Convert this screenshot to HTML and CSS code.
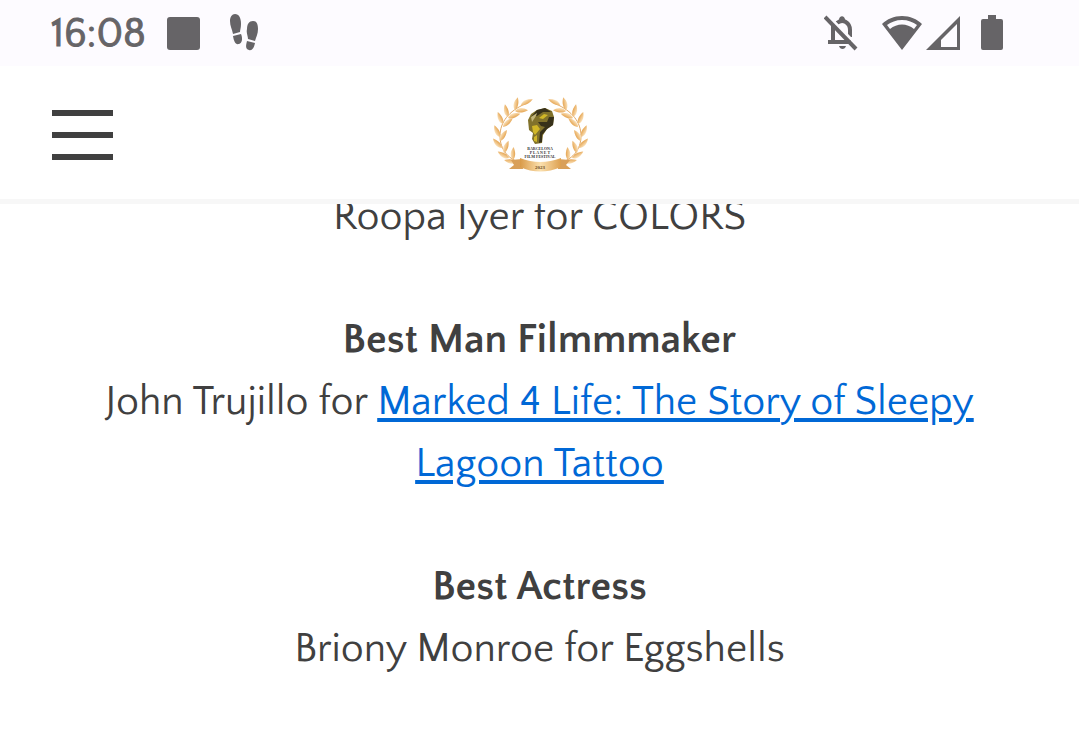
FILE: index.html
```html
<!DOCTYPE html>
<html lang="en">
<head>
    <meta charset="utf-8">
    <meta name="viewport" content="width=device-width, initial-scale=1">
    <title>Barcelona Planet Film Festival</title>
    <link rel="stylesheet" href="styles.css">
</head>
<body>
    <div class="status-bar">
        <div class="status-left">
            <span class="clock">16:08</span>
            <span class="app-square"></span>
            <svg class="steps" width="30" height="38" viewBox="0 0 30 38">
                <path d="M6 0C10 0 12 4 12 10C12 14 11 16 11 18L4 20C3 15 1 12 1 7C1 3 3 0 6 0Z"/>
                <path d="M4 22L12 20C14 25 13 29 10 30C6 31 5 27 4 22Z"/>
                <path d="M24 7C28 7 29 11 29 15C29 20 27 23 26 27L19 25C19 22 17 19 18 15C18 10 20 7 24 7Z"/>
                <path d="M18 27L26 29C25 34 23 37 20 36C16 35 17 31 18 27Z"/>
            </svg>
        </div>
        <div class="status-right">
            <svg width="34" height="36" viewBox="0 0 34 36">
                <path class="line" d="M9 11V27M4 27H27M13 8C19 3 26 8 26 15V22"/>
                <path d="M15 5C15 0 21 0 21 5V8H15ZM15 31H22C21 35 16 35 15 31Z"/>
                <path class="gap" d="M4 1L34 31"/>
                <path class="line" d="M1 2L32 34"/>
            </svg>
            <svg class="wifi" width="42" height="36" viewBox="0 0 42 36">
                <path d="M21 1C13 1 6 4 1 9L21 35L41 9C36 4 29 1 21 1ZM21 5C27 5 32 7 36 10L33 14C26 8 16 8 9 14L6 10C10 7 15 5 21 5Z" fill-rule="evenodd"/>
            </svg>
            <svg class="signal" width="36" height="36" viewBox="0 0 36 36">
                <path d="M35 1V35H1ZM32 9L16 25V32H32Z" fill-rule="evenodd"/>
            </svg>
            <svg class="battery" width="22" height="36" viewBox="0 0 22 36">
                <path d="M7 0H15V4H20Q22 4 22 6V33Q22 35 20 35H2Q0 35 0 33V6Q0 4 2 4H7Z"/>
            </svg>
        </div>
    </div>

    <header class="site-header">
        <button class="menu-button" type="button" aria-label="Menu">
            <span></span>
            <span></span>
            <span></span>
        </button>
        <a class="logo" href="#" aria-label="Home">
            <svg width="120" height="100" viewBox="0 0 120 100">
                <defs>
                    <linearGradient id="gold" x1="0" y1="0" x2="1" y2="0">
                        <stop offset="0" stop-color="#d99a48"/>
                        <stop offset="0.5" stop-color="#fbe0ae"/>
                        <stop offset="1" stop-color="#dda050"/>
                    </linearGradient>
                    <linearGradient id="leaf-gold" x1="0" y1="0" x2="1" y2="0">
                        <stop offset="0" stop-color="#fbe3bd"/>
                        <stop offset="1" stop-color="#e5a552"/>
                    </linearGradient>
                    <path id="leaf" fill="url(#leaf-gold)" d="M0 0C-3 -3 -3 -8 1 -13C3 -8 3 -3 0 0Z"/>
                    <g id="branch">
                        <path class="stem" d="M46 79C28 76 20 64 20 51C20 37 29 26 45 19"/>
                        <use href="#leaf" transform="translate(41 20) rotate(60)"/>
                        <use href="#leaf" transform="translate(35 25) rotate(8)"/>
                        <use href="#leaf" transform="translate(35 26) rotate(82)"/>
                        <use href="#leaf" transform="translate(28 32) rotate(-18)"/>
                        <use href="#leaf" transform="translate(28 33) rotate(66)"/>
                        <use href="#leaf" transform="translate(23 39) rotate(-28)"/>
                        <use href="#leaf" transform="translate(23 42) rotate(44)"/>
                        <use href="#leaf" transform="translate(20 52) rotate(-30)"/>
                        <use href="#leaf" transform="translate(20 56) rotate(28)"/>
                        <use href="#leaf" transform="translate(22 63) rotate(-48)"/>
                        <use href="#leaf" transform="translate(24 68) rotate(16)"/>
                        <use href="#leaf" transform="translate(29 73) rotate(-64)"/>
                        <use href="#leaf" transform="translate(33 75) rotate(-2)"/>
                        <use href="#leaf" transform="translate(37 77) rotate(-86)"/>
                    </g>
                </defs>
                <use href="#branch"/>
                <use href="#branch" transform="translate(121 0) scale(-1 1)"/>
                <path fill="#81722b" d="M57 25L65 23L72 26L74 32L73 40L67 44L63 50L62 58L55 59L52 54L53 48L49 45L48 35L51 29Z"/>
                <path fill="#37311a" d="M57 25L65 23L71 27L63 27L57 31L51 32ZM69 32L74 32L73 40L67 44L62 50L62 57L59 58L60 47L65 42L61 41L58 37L67 37Z"/>
                <path fill="#d1b727" d="M52 41L57 40L60 44L55 50L53 47ZM59 33L64 29L68 30L63 34ZM54 52L57 50L57 57L54 56Z"/>
                <path fill="#c2b57a" d="M51 32L57 28L56 31L52 37Z"/>
                <g class="logo-text">
                    <text x="60" y="65">BARCELONA</text>
                    <text x="60" y="69">P L A N E T</text>
                    <text x="60" y="73">FILM FESTIVAL</text>
                </g>
                <path fill="#d9a05a" d="M42 74L31 75L34 80L29 84L43 84ZM78 74L90 75L86 80L91 84L78 84Z"/>
                <path fill="url(#gold)" d="M40 73Q60 81 81 73V82Q60 91 40 82Z"/>
                <text class="logo-year" x="60" y="84">2023</text>
            </svg>
        </a>
    </header>

    <main class="awards">
        <section class="award">
            <p>Roopa Iyer for COLORS</p>
        </section>
        <section class="award">
            <h2>Best Man Filmmmaker</h2>
            <p>John Trujillo for <a href="#">Marked 4 Life: The Story of Sleepy Lagoon Tattoo</a></p>
        </section>
        <section class="award">
            <h2>Best Actress</h2>
            <p>Briony Monroe for Eggshells</p>
        </section>
    </main>
</body>
</html>
```
FILE: styles.css
```css
* {
    box-sizing: border-box;
}

body {
    margin: 0;
    background-color: #fff;
    color: #404040;
    font-family: "Quattrocento Sans", Lato, sans-serif;
}

svg {
    display: block;
}

.status-bar {
    display: flex;
    justify-content: space-between;
    align-items: center;
    height: 66px;
    padding: 0 76px 0 51px;
    background-color: #fdfbff;
    color: #666467;
    fill: #666467;
}

.status-left,
.status-right {
    display: flex;
    align-items: center;
}

.clock {
    padding-top: 2px;
    font-size: 41px;
    line-height: 40px;
    -webkit-text-stroke: 1px #666467;
}

.app-square {
    width: 33px;
    height: 33px;
    margin: 0 29px 0 21px;
    border-radius: 3px;
    background-color: #666467;
}

.line {
    fill: none;
    stroke: #666467;
    stroke-width: 4;
}

.gap {
    fill: none;
    stroke: #fdfbff;
    stroke-width: 3;
}

.wifi {
    margin-left: 23px;
}

.signal {
    margin-left: 2px;
}

.battery {
    margin-left: 20px;
}

.site-header {
    position: relative;
    z-index: 1;
    display: grid;
    grid-template-columns: 1fr auto 1fr;
    align-items: center;
    height: 138px;
    padding: 4px 52px 0;
    border-bottom: 5px solid #f7f7f7;
    background-color: #fff;
}

.menu-button {
    display: flex;
    flex-direction: column;
    gap: 16px;
    width: 61px;
    padding: 0;
    border: 0;
    background: none;
    cursor: pointer;
}

.menu-button span {
    height: 6px;
    background-color: #404040;
}

.stem {
    fill: none;
    stroke: #e2a965;
    stroke-width: 1;
}

.logo-text {
    fill: #333;
    font: bold 4px "Liberation Serif", serif;
    text-anchor: middle;
}

.logo-year {
    fill: #6b4a20;
    font: bold 5px "Liberation Serif", serif;
    text-anchor: middle;
}

/* the list is scrolled up under the header */
.awards {
    margin-top: -18px;
    padding: 0 52px;
    font-size: 41px;
    line-height: 62px;
    text-align: center;
}

.award {
    margin-bottom: 61px;
}

.award h2,
.award p {
    margin: 0;
    font-size: 41px;
}

.award a {
    color: #0068d6;
    text-decoration-thickness: 4px;
    text-underline-offset: 4px;
}
```
